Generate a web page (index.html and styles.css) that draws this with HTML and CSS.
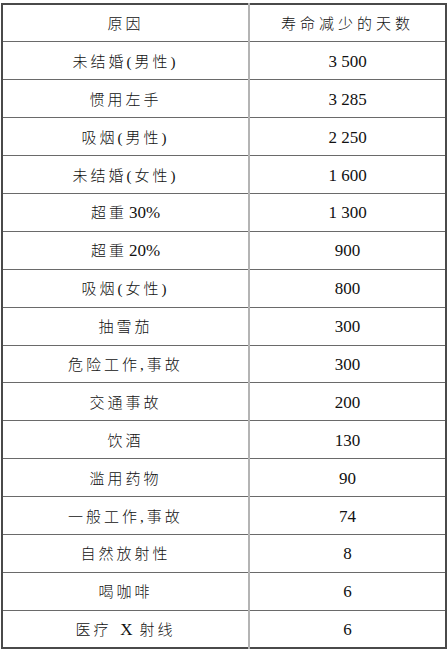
FILE: index.html
```html
<!DOCTYPE html>
<html lang="zh">
<head>
<meta charset="utf-8">
<link rel="stylesheet" href="styles.css">
</head>
<body>
<table class="life">
  <tr class="head"><th class="c1">原因</th><th class="c2">寿命减少的天数</th></tr>
  <tr><td class="c1">未结婚(男性)</td><td class="c2">3 500</td></tr>
  <tr><td class="c1">惯用左手</td><td class="c2">3 285</td></tr>
  <tr><td class="c1">吸烟(男性)</td><td class="c2">2 250</td></tr>
  <tr><td class="c1">未结婚(女性)</td><td class="c2">1 600</td></tr>
  <tr><td class="c1">超重<span class="num">30%</span></td><td class="c2">1 300</td></tr>
  <tr><td class="c1">超重<span class="num">20%</span></td><td class="c2">900</td></tr>
  <tr><td class="c1">吸烟(女性)</td><td class="c2">800</td></tr>
  <tr><td class="c1">抽雪茄</td><td class="c2">300</td></tr>
  <tr><td class="c1">危险工作,事故</td><td class="c2">300</td></tr>
  <tr><td class="c1">交通事故</td><td class="c2">200</td></tr>
  <tr><td class="c1">饮酒</td><td class="c2">130</td></tr>
  <tr><td class="c1">滥用药物</td><td class="c2">90</td></tr>
  <tr><td class="c1">一般工作,事故</td><td class="c2">74</td></tr>
  <tr><td class="c1">自然放射性</td><td class="c2">8</td></tr>
  <tr><td class="c1">喝咖啡</td><td class="c2">6</td></tr>
  <tr><td class="c1">医疗 <span class="num">X</span> 射线</td><td class="c2">6</td></tr>
</table>
</body>
</html>
```
FILE: styles.css
```css
html, body {
  margin: 0;
  padding: 0;
  background: #ffffff;
}
body {
  padding: 3px 0 0 1px;
  font-family: "Liberation Serif", "Noto Sans CJK SC", serif;
  color: #111111;
}
.life {
  border-collapse: collapse;
  width: 446px;
  border: 2px solid #4a4a4a;
  table-layout: fixed;
}
.life tr {
  height: 37.9px;
}
.life th, .life td {
  padding: 2px 0 0 0;
  text-align: center;
  vertical-align: middle;
  font-weight: normal;
  line-height: 20px;
  border-top: 1px solid #6a6a6a;
  border-bottom: 1px solid #6a6a6a;
}
.life .c1 {
  width: 245px;
  font-size: 15px;
  font-weight: 300;
  letter-spacing: 3px;
  border-right: 2px solid #b4b4b4;
}
.life .c2 {
  font-size: 17px;
  letter-spacing: 0;
}
.life .num {
  font-size: 17px;
  font-weight: normal;
  letter-spacing: 0;
  margin-left: 2px;
}
.life .head th {
  border-top: 2px solid #4a4a4a;
}
.life .head .c2 {
  font-size: 15px;
  font-weight: 300;
  letter-spacing: 4px;
}
```
